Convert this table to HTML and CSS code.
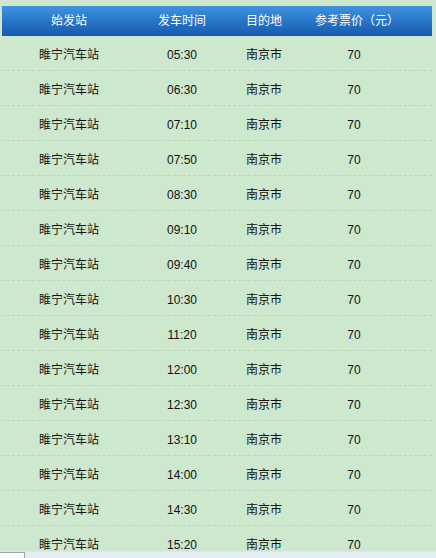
FILE: index.html
```html
<!DOCTYPE html>
<html lang="zh">
<head>
<meta charset="utf-8">
<title>睢宁汽车站时刻表</title>
<link rel="stylesheet" href="styles.css">
</head>
<body>
<div class="page">
  <div class="viewport">
    <div class="table">
      <div class="row head">
        <div class="c1">始发站</div><div class="c2">发车时间</div><div class="c3">目的地</div><div class="c4">参考票价（元）</div>
      </div>
      <div class="row"><div class="c1">睢宁汽车站</div><div class="c2 num">05:30</div><div class="c3">南京市</div><div class="c4 num">70</div></div>
      <div class="row"><div class="c1">睢宁汽车站</div><div class="c2 num">06:30</div><div class="c3">南京市</div><div class="c4 num">70</div></div>
      <div class="row"><div class="c1">睢宁汽车站</div><div class="c2 num">07:10</div><div class="c3">南京市</div><div class="c4 num">70</div></div>
      <div class="row"><div class="c1">睢宁汽车站</div><div class="c2 num">07:50</div><div class="c3">南京市</div><div class="c4 num">70</div></div>
      <div class="row"><div class="c1">睢宁汽车站</div><div class="c2 num">08:30</div><div class="c3">南京市</div><div class="c4 num">70</div></div>
      <div class="row"><div class="c1">睢宁汽车站</div><div class="c2 num">09:10</div><div class="c3">南京市</div><div class="c4 num">70</div></div>
      <div class="row"><div class="c1">睢宁汽车站</div><div class="c2 num">09:40</div><div class="c3">南京市</div><div class="c4 num">70</div></div>
      <div class="row"><div class="c1">睢宁汽车站</div><div class="c2 num">10:30</div><div class="c3">南京市</div><div class="c4 num">70</div></div>
      <div class="row"><div class="c1">睢宁汽车站</div><div class="c2 num">11:20</div><div class="c3">南京市</div><div class="c4 num">70</div></div>
      <div class="row"><div class="c1">睢宁汽车站</div><div class="c2 num">12:00</div><div class="c3">南京市</div><div class="c4 num">70</div></div>
      <div class="row"><div class="c1">睢宁汽车站</div><div class="c2 num">12:30</div><div class="c3">南京市</div><div class="c4 num">70</div></div>
      <div class="row"><div class="c1">睢宁汽车站</div><div class="c2 num">13:10</div><div class="c3">南京市</div><div class="c4 num">70</div></div>
      <div class="row"><div class="c1">睢宁汽车站</div><div class="c2 num">14:00</div><div class="c3">南京市</div><div class="c4 num">70</div></div>
      <div class="row"><div class="c1">睢宁汽车站</div><div class="c2 num">14:30</div><div class="c3">南京市</div><div class="c4 num">70</div></div>
      <div class="row"><div class="c1">睢宁汽车站</div><div class="c2 num">15:20</div><div class="c3">南京市</div><div class="c4 num">70</div></div>
    </div>
  </div>
  <div class="strip"><div class="thumb"></div></div>
</div>
</body>
</html>
```
FILE: styles.css
```css
html, body {
  margin: 0;
  padding: 0;
}
body {
  background: #cde8cd;
  font-family: "Liberation Sans", "Noto Sans CJK SC", sans-serif;
  font-size: 12px;
  color: #111;
}
.page {
  height: 558px;
  display: flex;
  flex-direction: column;
  overflow: hidden;
}
.viewport {
  flex: 1;
  overflow: hidden;
  padding: 6px 4px 0 2px;
}
.strip {
  height: 6px;
  background: #e6ecf6;
  border-top: 1px solid #dde4ee;
  display: flex;
}
.thumb {
  width: 24px;
  background: #fbfcfe;
  border-top: 1px solid #9aa4b0;
  border-right: 1px solid #9aa4b0;
}
.row {
  display: grid;
  grid-template-columns: 134px 92px 72px 108px 1fr;
  height: 34px;
  align-items: center;
  border-bottom: 1px dashed #b6d6b6;
}
.row > div {
  text-align: center;
}
.row .num {
  padding-top: 3px;
}
.head {
  height: 30px;
  border-bottom: none;
  background: linear-gradient(to bottom, #4293de 0%, #2a78cc 45%, #175aaa 100%);
  color: #fff;
  font-size: 12px;
  padding-bottom: 3px;
  box-sizing: border-box;
}
.head .c4 {
  padding-left: 6px;
}
```
